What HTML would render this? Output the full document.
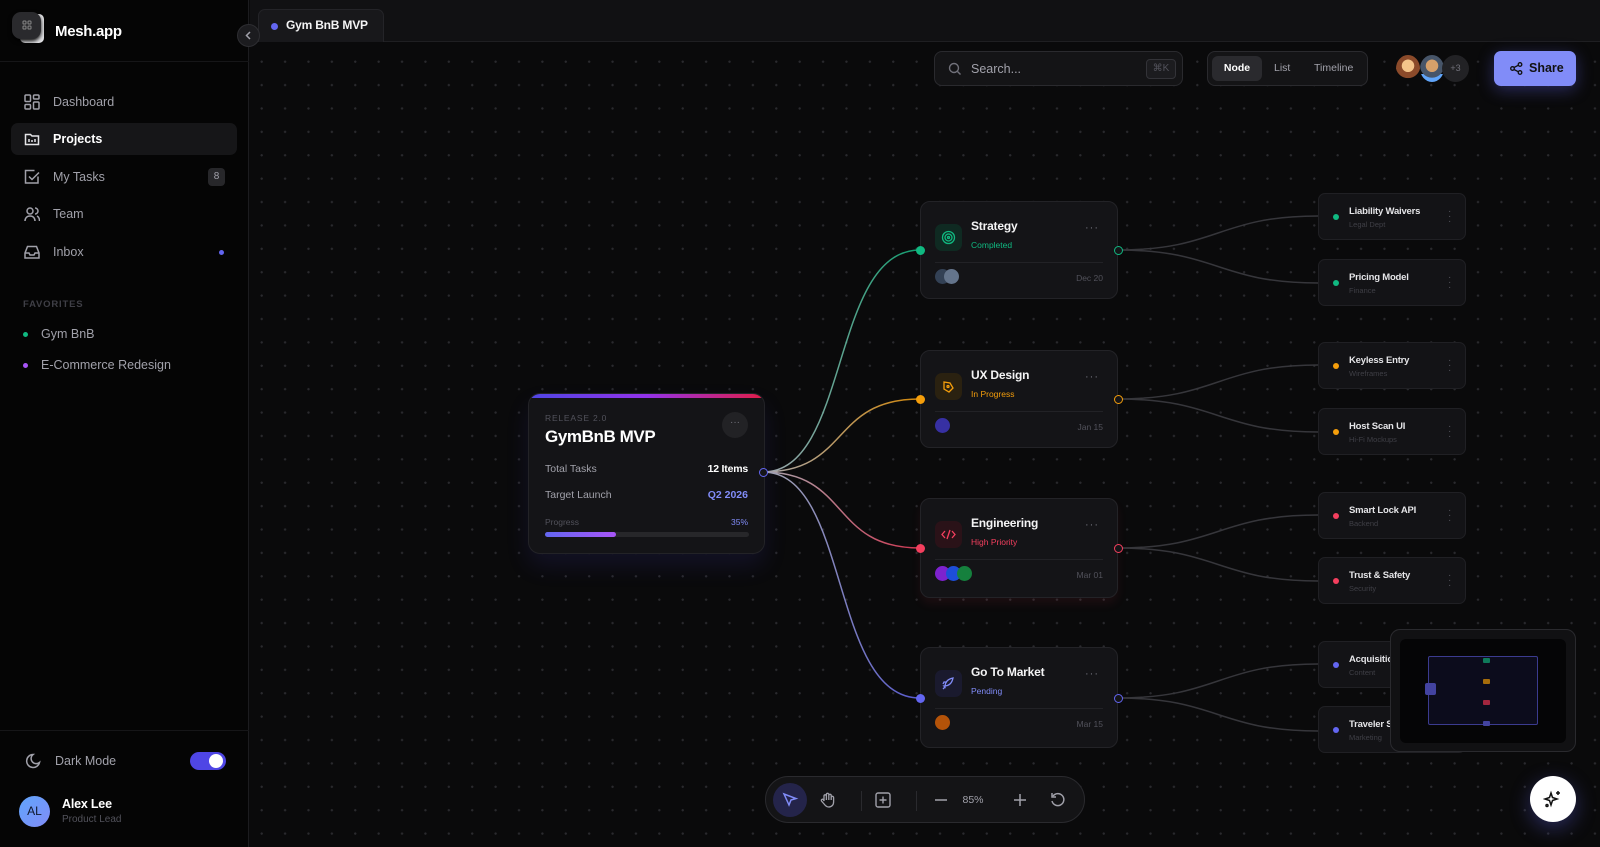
<!DOCTYPE html>
<html><head><meta charset="utf-8"><style>
*{box-sizing:border-box;margin:0;padding:0}
body{width:1600px;height:847px;overflow:hidden;background:#0a0a0b;font-family:"Liberation Sans",sans-serif;color:#e4e4e7;position:relative}
.abs{position:absolute}
#side{left:0;top:0;width:249px;height:847px;background:#050505;border-right:1px solid #1c1c1f}
.nav{position:absolute;left:11px;width:226px;height:32px;display:flex;align-items:center;font-size:12.5px;color:#a1a1aa}
.nav svg{position:absolute;left:13px}
.nav span{position:absolute;left:42px}
#canvas{left:250px;top:42px;width:1350px;height:805px;background-color:#0a0a0b;background-image:radial-gradient(circle,#2a2a2e 1px,transparent 1.3px);background-size:23.4px 23.4px;background-position:0px 8px}
.node{position:absolute;left:920px;width:198px;background:#141417;border:1px solid #232327;border-radius:10px}
.node .ic{position:absolute;left:14px;top:22px;width:27px;height:27px;border-radius:7px}
.node .t{position:absolute;left:50px;top:17px;font-size:12px;font-weight:bold;color:#f4f4f5;letter-spacing:-.2px}
.node .s{position:absolute;left:50px;top:38px;font-size:8.5px}
.node .dots{position:absolute;right:18px;top:20px;color:#71717a;font-size:11px;letter-spacing:1px}
.node .ln{position:absolute;left:14px;right:14px;top:60px;height:1px;background:#222226}
.node .d{position:absolute;right:14px;top:71px;font-size:8.5px;color:#52525b}
.av{position:absolute;top:67px;width:15px;height:15px;border-radius:50%}
.sub{position:absolute;left:1318px;width:148px;height:47px;background:#131316;border:1px solid #202024;border-radius:7px}
.sub .dt{position:absolute;left:14px;top:20px;width:6px;height:6px;border-radius:50%}
.sub .t{position:absolute;left:30px;top:12px;font-size:9.5px;font-weight:bold;color:#e4e4e7;letter-spacing:-.2px}
.sub .s{position:absolute;left:30px;top:26px;font-size:7.5px;color:#3f3f46}
.sub .m{position:absolute;right:14px;top:15px;color:#52525b;font-size:10px;line-height:5px;width:3px}
.port{position:absolute;width:9px;height:9px;border-radius:50%}
</style></head><body>
<div id="canvas" class="abs"></div>
<div class="abs" style="left:250px;top:0;width:1350px;height:42px;background:#111113;border-bottom:1px solid #1f1f22"></div>
<div class="abs" style="left:258px;top:9px;width:126px;height:33px;background:#18181b;border:1px solid #242428;border-bottom:none;border-radius:7px 7px 0 0"></div>
<div class="abs" style="left:271px;top:23px;width:7px;height:7px;border-radius:50%;background:#6366f1"></div>
<div class="abs" style="left:286px;top:18px;font-size:12px;font-weight:bold;color:#f4f4f5;letter-spacing:-.2px">Gym BnB MVP</div>

<div id="side" class="abs">
 <div class="abs" style="left:20px;top:14px;width:24px;height:29px;background:#e4e4e7;border-radius:5px"></div>
 <div class="abs" style="left:12px;top:12px;width:29px;height:27px;background:#2a2a2d;border-radius:9px;box-shadow:0 2px 4px #000"><svg width="29" height="27"><g fill="none" stroke="#888" stroke-width="1"><rect x="11" y="9" width="3" height="3" rx=".8"/><rect x="16" y="9" width="3" height="3" rx=".8"/><rect x="11" y="14" width="3" height="3" rx=".8"/><rect x="16" y="14" width="3" height="3" rx=".8"/></g></svg></div>
 <div class="abs" style="left:55px;top:23px;font-size:15px;font-weight:bold;color:#fff;letter-spacing:-.3px">Mesh.app</div>
 <div class="abs" style="left:0;top:61px;width:249px;height:1px;background:#161618"></div>
 <div class="nav" style="top:86px"><svg width="16" height="16" fill="none" stroke="#a1a1aa" stroke-width="1.5"><rect x="1" y="1" width="5.5" height="6.5" rx="1"/><rect x="9.5" y="1" width="5.5" height="4" rx="1"/><rect x="1" y="10.5" width="5.5" height="4.5" rx="1"/><rect x="9.5" y="8" width="5.5" height="7" rx="1"/></svg><span>Dashboard</span></div>
 <div class="nav" style="top:123px;background:#161618;border-radius:7px;color:#fff;font-weight:bold"><svg width="16" height="16" fill="none" stroke="#e4e4e7" stroke-width="1.5"><path d="M1.5 3.5h5l1.5 1.5h6.5v8.5h-13z"/><path d="M5 8v3M8 9v2M11 8v3"/></svg><span>Projects</span></div>
 <div class="nav" style="top:161px"><svg width="16" height="16" fill="none" stroke="#a1a1aa" stroke-width="1.5"><path d="M14 7.5v6.5h-12.5v-12.5h9"/><path d="M5 7.5l3 3 7-7"/></svg><span>My Tasks</span><div class="abs" style="left:197px;top:7px;width:17px;height:18px;background:#27272a;border-radius:4px;font-size:10px;color:#a1a1aa;text-align:center;line-height:18px">8</div></div>
 <div class="nav" style="top:198px"><svg width="16" height="16" fill="none" stroke="#a1a1aa" stroke-width="1.5"><circle cx="6" cy="5" r="3"/><path d="M1 15c0-3 2-5 5-5s5 2 5 5M11 2a3 3 0 010 6M13 10c1.5 .8 2.5 2.5 2.5 5"/></svg><span>Team</span></div>
 <div class="nav" style="top:236px"><svg width="16" height="16" fill="none" stroke="#a1a1aa" stroke-width="1.5"><path d="M1 9l2.5-6.5h9L15 9v5H1z"/><path d="M1 9h4l1 2h4l1-2h4"/></svg><span>Inbox</span><div class="abs" style="left:208px;top:14px;width:5px;height:5px;border-radius:50%;background:#6366f1"></div></div>
 <div class="abs" style="left:23px;top:299px;font-size:9.5px;color:#3f3f46;letter-spacing:.8px;font-weight:bold">FAVORITES</div>
 <div class="abs" style="left:23px;top:332px;width:5px;height:5px;border-radius:50%;background:#10b981"></div>
 <div class="abs" style="left:41px;top:327px;font-size:12.5px;color:#a1a1aa">Gym BnB</div>
 <div class="abs" style="left:23px;top:363px;width:5px;height:5px;border-radius:50%;background:#a855f7"></div>
 <div class="abs" style="left:41px;top:358px;font-size:12.5px;color:#a1a1aa">E-Commerce Redesign</div>
 <div class="abs" style="left:0;top:730px;width:249px;height:1px;background:#161618"></div>
 <svg class="abs" style="left:25px;top:753px" width="16" height="16" fill="none" stroke="#a1a1aa" stroke-width="1.5"><path d="M8 1.5a6.5 6.5 0 106.5 8 5 5 0 01-6.5-8z"/></svg>
 <div class="abs" style="left:55px;top:754px;font-size:12.5px;color:#a1a1aa">Dark Mode</div>
 <div class="abs" style="left:190px;top:752px;width:36px;height:18px;border-radius:9px;background:#4f46e5"><div class="abs" style="left:19px;top:2px;width:14px;height:14px;border-radius:50%;background:#fff"></div></div>
 <div class="abs" style="left:19px;top:796px;width:31px;height:31px;border-radius:50%;background:linear-gradient(135deg,#60a5fa,#818cf8);color:#0f172a;font-size:12px;text-align:center;line-height:31px">AL</div>
 <div class="abs" style="left:62px;top:797px;font-size:12.5px;font-weight:bold;color:#fff;letter-spacing:-.2px">Alex Lee</div>
 <div class="abs" style="left:62px;top:814px;font-size:10px;color:#52525b">Product Lead</div>
</div>
<div class="abs" style="left:237px;top:24px;width:23px;height:23px;border-radius:50%;background:#1c1c1f;border:1px solid #2e2e32"><svg width="21" height="21" fill="none" stroke="#a1a1aa" stroke-width="1.5"><path d="M12 7l-3.5 3.5L12 14"/></svg></div>

<svg class="abs" style="left:0;top:0" width="1600" height="847">
<defs>
<linearGradient id="g1" gradientUnits="userSpaceOnUse" x1="763" y1="0" x2="920" y2="0"><stop offset="0" stop-color="#c4c4cc"/><stop offset="1" stop-color="#10b981"/></linearGradient>
<linearGradient id="g2" gradientUnits="userSpaceOnUse" x1="763" y1="0" x2="920" y2="0"><stop offset="0" stop-color="#c4c4cc"/><stop offset="1" stop-color="#f59e0b"/></linearGradient>
<linearGradient id="g3" gradientUnits="userSpaceOnUse" x1="763" y1="0" x2="920" y2="0"><stop offset="0" stop-color="#c4c4cc"/><stop offset="1" stop-color="#f43f5e"/></linearGradient>
<linearGradient id="g4" gradientUnits="userSpaceOnUse" x1="763" y1="0" x2="920" y2="0"><stop offset="0" stop-color="#c4c4cc"/><stop offset="1" stop-color="#6366f1"/></linearGradient>
</defs>
<g fill="none" stroke-width="1.5" opacity=".85">
<path d="M763 472C850 472 830 250 920 250" stroke="url(#g1)"/>
<path d="M763 472C850 472 830 399 920 399" stroke="url(#g2)"/>
<path d="M763 472C850 472 830 548 920 548" stroke="url(#g3)"/>
<path d="M763 472C850 472 830 698 920 698" stroke="url(#g4)"/>
</g>
<g fill="none" stroke="#36363b" stroke-width="1.5">
<path d="M1118 250C1218 250 1218 216 1318 216"/><path d="M1118 250C1218 250 1218 283 1318 283"/>
<path d="M1118 399C1218 399 1218 365 1318 365"/><path d="M1118 399C1218 399 1218 432 1318 432"/>
<path d="M1118 548C1218 548 1218 515 1318 515"/><path d="M1118 548C1218 548 1218 581 1318 581"/>
<path d="M1118 698C1218 698 1218 664 1318 664"/><path d="M1118 698C1218 698 1218 731 1318 731"/>
</g>
</svg>

<div class="abs" style="left:528px;top:393px;width:237px;height:161px;background:#141417;border:1px solid #232327;border-radius:12px;overflow:hidden;box-shadow:0 12px 24px rgba(79,70,229,.12)">
 <div class="abs" style="left:0;top:0;width:100%;height:4px;background:linear-gradient(90deg,#4f46e5,#9333ea,#e11d48)"></div>
 <div class="abs" style="left:16px;top:19px;font-size:8.5px;color:#52525b;letter-spacing:.8px">RELEASE 2.0</div>
 <div class="abs" style="left:16px;top:33px;font-size:17px;font-weight:bold;color:#fff;letter-spacing:-.4px">GymBnB MVP</div>
 <div class="abs" style="left:193px;top:18px;width:26px;height:26px;border-radius:50%;background:#222225;color:#71717a;font-size:10px;text-align:center;line-height:22px">···</div>
 <div class="abs" style="left:16px;top:69px;font-size:10.5px;color:#a1a1aa">Total Tasks</div>
 <div class="abs" style="right:16px;top:69px;font-size:10.5px;color:#fff;font-weight:bold;letter-spacing:-.2px">12 Items</div>
 <div class="abs" style="left:16px;top:95px;font-size:10.5px;color:#a1a1aa">Target Launch</div>
 <div class="abs" style="right:16px;top:95px;font-size:10.5px;color:#818cf8;font-weight:bold">Q2 2026</div>
 <div class="abs" style="left:16px;top:123px;font-size:8.5px;color:#52525b">Progress</div>
 <div class="abs" style="right:16px;top:123px;font-size:8.5px;color:#818cf8">35%</div>
 <div class="abs" style="left:16px;top:138px;width:204px;height:5px;border-radius:3px;background:#27272a"><div style="width:35%;height:100%;border-radius:3px;background:linear-gradient(90deg,#6366f1,#a855f7)"></div></div>
</div>
<div class="port" style="left:759px;top:468px;background:#151518;border:1.5px solid #6366f1"></div>

<div class="node" style="top:201px;height:98px"><div class="ic" style="background:#0f2a22"><svg width="27" height="27" fill="none" stroke="#10b981" stroke-width="1.3"><circle cx="13.5" cy="13.5" r="6"/><circle cx="13.5" cy="13.5" r="3.5"/><circle cx="13.5" cy="13.5" r="1"/></svg></div><div class="t">Strategy</div><div class="s" style="color:#10b981">Completed</div><div class="dots">···</div><div class="ln"></div><div class="av" style="left:14px;background:#334155"></div><div class="av" style="left:23px;background:#64748b"></div><div class="d">Dec 20</div></div>
<div class="node" style="top:350px;height:98px"><div class="ic" style="background:#2a2110"><svg width="27" height="27" fill="none" stroke="#f59e0b" stroke-width="1.3"><path d="M9 9l6 1 3 5-4 4-5-3z"/><circle cx="13" cy="13.5" r="1"/></svg></div><div class="t">UX Design</div><div class="s" style="color:#f59e0b">In Progress</div><div class="dots">···</div><div class="ln"></div><div class="av" style="left:14px;background:#3730a3"></div><div class="d">Jan 15</div></div>
<div class="node" style="top:498px;height:100px;box-shadow:0 6px 10px rgba(244,63,94,.08)"><div class="ic" style="background:#2a1218"><svg width="27" height="27" fill="none" stroke="#f43f5e" stroke-width="1.3"><path d="M10 10l-3 3.5 3 3.5M17 10l3 3.5-3 3.5M15 9l-3 9"/></svg></div><div class="t">Engineering</div><div class="s" style="color:#f43f5e">High Priority</div><div class="dots">···</div><div class="ln"></div><div class="av" style="left:14px;background:#7e22ce"></div><div class="av" style="left:25px;background:#1d4ed8"></div><div class="av" style="left:36px;background:#15803d"></div><div class="d">Mar 01</div></div>
<div class="node" style="top:647px;height:101px"><div class="ic" style="background:#1a1a2e"><svg width="27" height="27" fill="none" stroke="#818cf8" stroke-width="1.3"><path d="M10 17c0-5 3-8 8-9-1 5-4 8-9 8zM10 17l-2 2M12 12l-3 0-1 2"/></svg></div><div class="t">Go To Market</div><div class="s" style="color:#818cf8">Pending</div><div class="dots">···</div><div class="ln"></div><div class="av" style="left:14px;background:#b45309"></div><div class="d">Mar 15</div></div>

<div class="port" style="left:916px;top:246px;background:#10b981"></div><div class="port" style="left:1114px;top:246px;background:#151518;border:1.5px solid #10b981"></div>
<div class="port" style="left:916px;top:395px;background:#f59e0b"></div><div class="port" style="left:1114px;top:395px;background:#151518;border:1.5px solid #f59e0b"></div>
<div class="port" style="left:916px;top:544px;background:#f43f5e"></div><div class="port" style="left:1114px;top:544px;background:#151518;border:1.5px solid #f43f5e"></div>
<div class="port" style="left:916px;top:694px;background:#6366f1"></div><div class="port" style="left:1114px;top:694px;background:#151518;border:1.5px solid #6366f1"></div>

<div class="sub" style="top:193px"><div class="dt" style="background:#10b981"></div><div class="t">Liability Waivers</div><div class="s">Legal Dept</div><div class="m">·<br>·<br>·</div></div>
<div class="sub" style="top:259px"><div class="dt" style="background:#10b981"></div><div class="t">Pricing Model</div><div class="s">Finance</div><div class="m">·<br>·<br>·</div></div>
<div class="sub" style="top:342px"><div class="dt" style="background:#f59e0b"></div><div class="t">Keyless Entry</div><div class="s">Wireframes</div><div class="m">·<br>·<br>·</div></div>
<div class="sub" style="top:408px"><div class="dt" style="background:#f59e0b"></div><div class="t">Host Scan UI</div><div class="s">Hi-Fi Mockups</div><div class="m">·<br>·<br>·</div></div>
<div class="sub" style="top:492px"><div class="dt" style="background:#f43f5e"></div><div class="t">Smart Lock API</div><div class="s">Backend</div><div class="m">·<br>·<br>·</div></div>
<div class="sub" style="top:557px"><div class="dt" style="background:#f43f5e"></div><div class="t">Trust &amp; Safety</div><div class="s">Security</div><div class="m">·<br>·<br>·</div></div>
<div class="sub" style="top:641px"><div class="dt" style="background:#6366f1"></div><div class="t">Acquisition</div><div class="s">Content</div></div>
<div class="sub" style="top:706px"><div class="dt" style="background:#6366f1"></div><div class="t">Traveler Surveys</div><div class="s">Marketing</div></div>

<div class="abs" style="left:1390px;top:629px;width:186px;height:123px;background:#111113;border:1px solid #2a2a2e;border-radius:10px"><div class="abs" style="left:9px;top:9px;width:166px;height:104px;background:#050506;border-radius:6px">
 <div class="abs" style="left:28px;top:17px;width:110px;height:69px;border:1.5px solid #3b3b8f;background:#0c0c1c;border-radius:2px"></div>
 <div class="abs" style="left:25px;top:44px;width:11px;height:12px;background:#4343a0;border-radius:2px"></div>
 <div class="abs" style="left:83px;top:19px;width:7px;height:5px;background:#0f7a5a;border-radius:1px"></div>
 <div class="abs" style="left:83px;top:40px;width:7px;height:5px;background:#a66d0b;border-radius:1px"></div>
 <div class="abs" style="left:83px;top:61px;width:7px;height:5px;background:#a3263e;border-radius:1px"></div>
 <div class="abs" style="left:83px;top:82px;width:7px;height:5px;background:#4343a0;border-radius:1px"></div>
</div></div>

<div class="abs" style="left:934px;top:51px;width:249px;height:35px;background:#141416;border:1px solid #2a2a2e;border-radius:8px">
 <svg class="abs" style="left:13px;top:10px" width="14" height="14" fill="none" stroke="#71717a" stroke-width="1.4"><circle cx="6" cy="6" r="4.5"/><path d="M9.5 9.5l3 3"/></svg>
 <div class="abs" style="left:36px;top:10px;font-size:12.5px;color:#a1a1aa">Search...</div>
 <div class="abs" style="left:211px;top:7px;width:30px;height:20px;border:1px solid #333338;border-radius:4px;background:#1c1c1f;font-size:10px;color:#52525b;text-align:center;line-height:18px">⌘K</div>
</div>
<div class="abs" style="left:1207px;top:51px;width:161px;height:35px;background:#141416;border:1px solid #2a2a2e;border-radius:8px">
 <div class="abs" style="left:4px;top:4px;width:50px;height:25px;background:#2a2a2e;border-radius:6px;font-size:10.5px;font-weight:bold;color:#fff;text-align:center;line-height:25px">Node</div>
 <div class="abs" style="left:66px;top:10px;font-size:10.5px;color:#a1a1aa">List</div>
 <div class="abs" style="left:106px;top:10px;font-size:10.5px;color:#a1a1aa">Timeline</div>
</div>
<div class="abs" style="left:1396px;top:55px;width:24px;height:27px;border-radius:50%;background:radial-gradient(circle at 50% 40%,#f3c48a 30%,#8b4a2a 32%,#8b4a2a 60%,transparent 62%)"></div>
<div class="abs" style="left:1420px;top:55px;width:24px;height:27px;border-radius:50%;background:radial-gradient(circle at 50% 40%,#d6a06a 30%,#475569 32%,#475569 58%,transparent 60%),linear-gradient(#0000 70%,#60a5fa 70%)"></div>
<div class="abs" style="left:1442px;top:55px;width:27px;height:27px;border-radius:50%;background:#222225;font-size:9px;color:#71717a;text-align:center;line-height:27px">+3</div>
<div class="abs" style="left:1494px;top:51px;width:82px;height:35px;background:#818cf8;border-radius:7px;box-shadow:0 4px 16px rgba(99,102,241,.35)">
 <svg class="abs" style="left:16px;top:11px" width="13" height="13" fill="none" stroke="#111" stroke-width="1.3"><circle cx="10" cy="2.5" r="1.8"/><circle cx="2.5" cy="6.5" r="1.8"/><circle cx="10" cy="10.5" r="1.8"/><path d="M4 5.5l4.5-2.3M4 7.5l4.5 2.3"/></svg>
 <div class="abs" style="left:35px;top:10px;font-size:12.5px;color:#111;font-weight:bold">Share</div>
</div>

<div class="abs" style="left:765px;top:776px;width:320px;height:47px;background:#141416;border:1px solid #2a2a2e;border-radius:24px">
 <div class="abs" style="left:7px;top:6px;width:34px;height:34px;border-radius:50%;background:#24244a"></div>
 <svg class="abs" style="left:15px;top:14px" width="18" height="18" fill="none" stroke="#818cf8" stroke-width="1.5"><path d="M3 3l12 4.5-5 1.5-2 5z"/></svg>
 <svg class="abs" style="left:53px;top:14px" width="18" height="18" fill="none" stroke="#a1a1aa" stroke-width="1.3"><path d="M5 10V5a1.2 1.2 0 012.4 0v4V3.5a1.2 1.2 0 012.4 0V9V4.5a1.2 1.2 0 012.4 0V9V6.5a1.2 1.2 0 012.4 0V11c0 3-2 5-5 5-2 0-3-1-4.5-3L2.5 10a1.2 1.2 0 012-1.3z"/></svg>
 <div class="abs" style="left:95px;top:14px;width:1px;height:20px;background:#2a2a2e"></div>
 <svg class="abs" style="left:108px;top:14px" width="18" height="18" fill="none" stroke="#a1a1aa" stroke-width="1.4"><rect x="2" y="2" width="14" height="14" rx="2"/><path d="M9 5.5v7M5.5 9h7"/></svg>
 <div class="abs" style="left:150px;top:14px;width:1px;height:20px;background:#2a2a2e"></div>
 <svg class="abs" style="left:166px;top:14px" width="18" height="18" stroke="#a1a1aa" stroke-width="1.5"><path d="M3 9h12"/></svg>
 <div class="abs" style="left:182px;top:17px;width:50px;text-align:center;font-size:10.5px;color:#a1a1aa">85%</div>
 <svg class="abs" style="left:245px;top:14px" width="18" height="18" stroke="#a1a1aa" stroke-width="1.5"><path d="M3 9h12M9 3v12"/></svg>
 <svg class="abs" style="left:283px;top:14px" width="18" height="18" fill="none" stroke="#a1a1aa" stroke-width="1.5"><path d="M4 5a6 6 0 11-1 5"/><path d="M3 2v4h4"/></svg>
</div>
<div class="abs" style="left:1530px;top:776px;width:46px;height:46px;border-radius:50%;background:#fff;box-shadow:0 6px 20px rgba(99,102,241,.35)">
 <svg class="abs" style="left:13px;top:13px" width="20" height="20" fill="none" stroke="#111" stroke-width="1.5"><path d="M8 4l1.5 4.5L14 10l-4.5 1.5L8 16l-1.5-4.5L2 10l4.5-1.5z"/><path d="M15 2v4M13 4h4"/><circle cx="4" cy="16.5" r="1"/></svg>
</div>
</body></html>
